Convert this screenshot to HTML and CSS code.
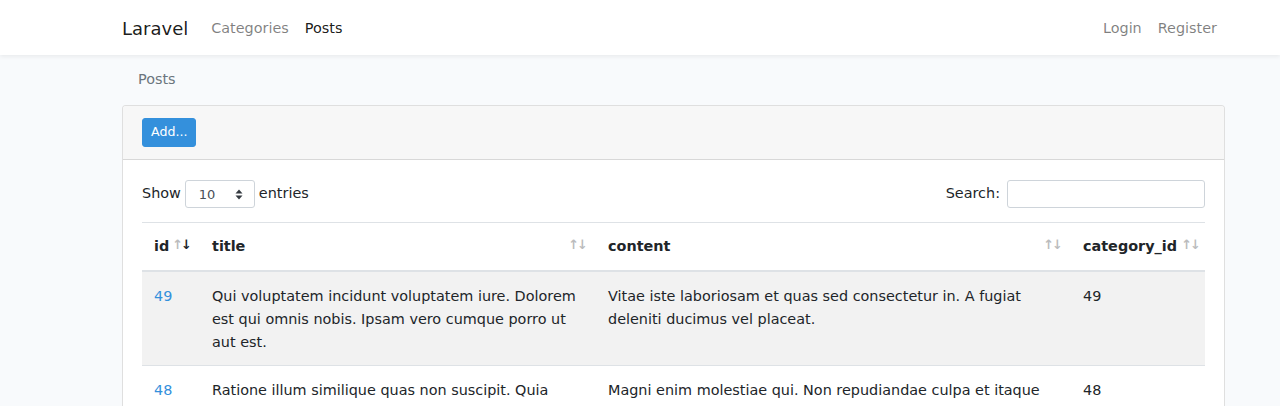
FILE: index.html
```html
<!DOCTYPE html>
<html lang="en">
<head>
<meta charset="utf-8">
<title>Posts</title>
<link rel="stylesheet" href="styles.css">
</head>
<body>
<nav class="navbar">
  <div class="container nav-inner">
    <a class="brand" href="#">Laravel</a>
    <ul class="nav">
      <li><a class="nav-link" href="#">Categories</a></li>
      <li><a class="nav-link active" href="#">Posts</a></li>
    </ul>
    <ul class="nav nav-right">
      <li><a class="nav-link" href="#">Login</a></li>
      <li><a class="nav-link" href="#">Register</a></li>
    </ul>
  </div>
</nav>
<main class="container">
  <ol class="breadcrumb"><li>Posts</li></ol>
  <div class="card">
    <div class="card-header">
      <button class="btn">Add...</button>
    </div>
    <div class="card-body">
      <div class="dt-top">
        <label class="dt-length">Show
          <span class="select"><span>10</span><svg width="8" height="11" viewBox="0 0 8 11"><path d="M4 0.5 L7.5 4.5 H0.5 Z M4 10.5 L7.5 6.5 H0.5 Z" fill="#343a40"/></svg></span>
          entries</label>
        <label class="dt-search">Search: <span class="input"></span></label>
      </div>
      <table class="table">
        <colgroup>
          <col class="c-id"><col class="c-title"><col class="c-content"><col class="c-cat">
        </colgroup>
        <thead>
          <tr>
            <th class="sorted">id<span class="sort"><i class="up">↑</i><i class="down">↓</i></span></th>
            <th>title<span class="sort"><i class="up">↑</i><i class="down">↓</i></span></th>
            <th>content<span class="sort"><i class="up">↑</i><i class="down">↓</i></span></th>
            <th class="last">category_id<span class="sort"><i class="up">↑</i><i class="down">↓</i></span></th>
          </tr>
        </thead>
        <tbody>
          <tr class="odd">
            <td><a href="#">49</a></td>
            <td>Qui voluptatem incidunt voluptatem iure. Dolorem est qui omnis nobis. Ipsam vero cumque porro ut aut est.</td>
            <td>Vitae iste laboriosam et quas sed consectetur in. A fugiat deleniti ducimus vel placeat.</td>
            <td>49</td>
          </tr>
          <tr>
            <td><a href="#">48</a></td>
            <td>Ratione illum similique quas non suscipit. Quia voluptas ut et dolorem.</td>
            <td>Magni enim molestiae qui. Non repudiandae culpa et itaque dolores.</td>
            <td>48</td>
          </tr>
        </tbody>
      </table>
    </div>
  </div>
</main>
</body>
</html>
```
FILE: styles.css
```css
* { box-sizing: border-box; }
html, body { margin: 0; padding: 0; }
body {
  background: #f8fafc;
  font-family: "DejaVu Sans", sans-serif;
  font-size: 14.4px;
  line-height: 1.6;
  color: #212529;
}
a { text-decoration: none; }
.container {
  width: 1103px;
  margin-left: 122px;
}
.navbar {
  background: #fff;
  height: 55px;
  box-shadow: 0 2px 4px rgba(0,0,0,0.06);
  position: relative;
}
.nav-inner {
  display: flex;
  align-items: center;
  height: 55px;
  padding-top: 2px;
}
.brand {
  font-size: 18px;
  color: rgba(0,0,0,0.9);
  margin-right: 15px;
  line-height: 1;
}
.nav {
  display: flex;
  list-style: none;
  margin: 0;
  padding: 0;
}
.nav-right { margin-left: auto; }
.nav-link {
  display: block;
  padding: 8px 8px;
  color: rgba(0,0,0,0.5);
}
.nav-link.active { color: rgba(0,0,0,0.9); }
.breadcrumb {
  list-style: none;
  margin: 0 0 3px;
  padding: 13px 16px 11px;
  color: #6c757d;
}
.card {
  background: #fff;
  border: 1px solid rgba(0,0,0,0.125);
  border-radius: 4px;
}
.card-header {
  background: #f7f7f7;
  border-bottom: 1px solid rgba(0,0,0,0.125);
  padding: 12px 19px;
  border-radius: 3px 3px 0 0;
}
.btn {
  display: block;
  font-family: inherit;
  font-size: 12.6px;
  line-height: 1.5;
  height: 29px;
  padding: 4px 8px;
  color: #fff;
  background: #3490dc;
  border: 1px solid #3490dc;
  border-radius: 3px;
}
.card-body { padding: 19px 19px 20px; }
.dt-top {
  display: flex;
  justify-content: space-between;
  align-items: center;
  height: 28px;
  margin-top: 1px;
  margin-bottom: 14px;
}
.dt-length, .dt-search {
  display: flex;
  align-items: center;
  gap: 4px;
  margin-top: -2px;
}
.select {
  display: inline-flex;
  align-items: center;
  justify-content: space-between;
  width: 70px;
  height: 28px;
  margin-top: 2px;
  padding: 3px 11px 0 13px;
  border: 1px solid #ced4da;
  border-radius: 3px;
  font-size: 13px;
  color: #495057;
}
.select svg { margin-top: -3px; }
.dt-search { gap: 7px; }
.input {
  display: inline-block;
  width: 198px;
  height: 28px;
  margin-top: 2px;
  border: 1px solid #ced4da;
  border-radius: 3px;
}
.table {
  width: 100%;
  border-collapse: collapse;
  table-layout: fixed;
}
.c-id { width: 58px; }
.c-title { width: 396px; }
.c-content { width: 475px; }
.c-cat { width: 134px; }
.table th, .table td {
  padding: 12px;
  text-align: left;
  vertical-align: top;
  border-top: 1px solid #dee2e6;
}
.table td { padding-top: 13px; padding-bottom: 11px; }
.table th {
  position: relative;
  font-weight: bold;
  border-bottom: 2px solid #dee2e6;
  padding-right: 30px;
  white-space: nowrap;
}
.table th.sorted { padding-right: 12px; }
.sort {
  position: absolute;
  right: 10px;
  top: 12px;
  font-size: 13px;
  letter-spacing: -2px;
  font-style: normal;
}
.sort i { font-style: normal; opacity: 0.3; }
.sorted .sort .down { opacity: 1; }
.sorted .sort { right: 10px; }
.last .sort { right: 6px; }
.table td a { color: #3490dc; }
.table tbody tr.odd { background: #f2f2f2; }
```
